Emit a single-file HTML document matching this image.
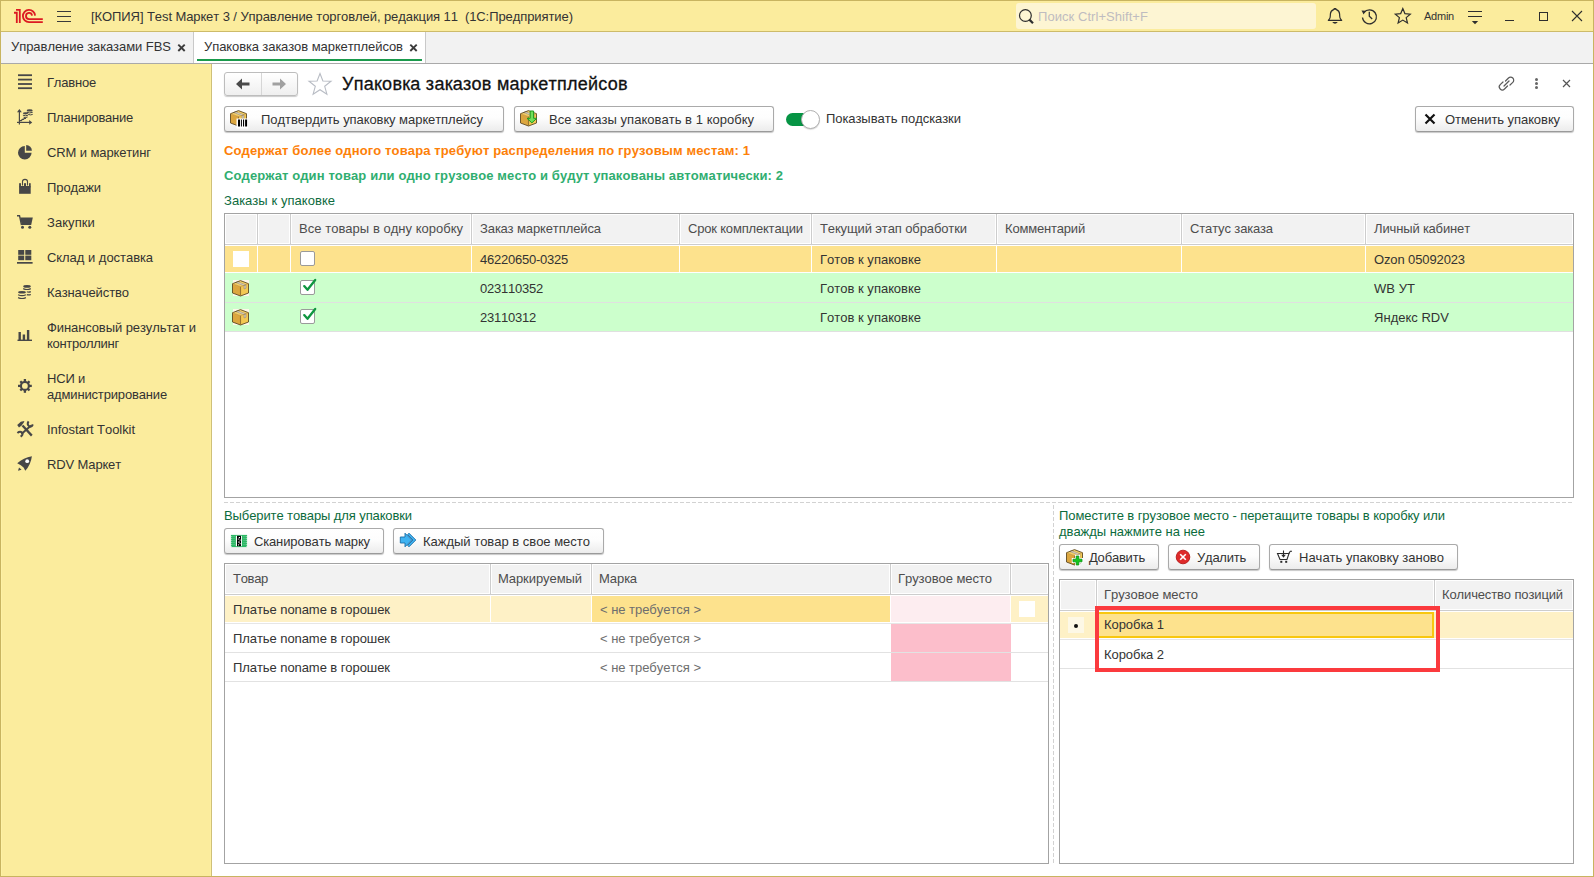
<!DOCTYPE html>
<html><head><meta charset="utf-8">
<style>
*{box-sizing:border-box;margin:0;padding:0}
html,body{width:1594px;height:877px;overflow:hidden;background:#fff}
body{font-family:"Liberation Sans",sans-serif;font-size:13px;color:#333;position:relative;font-kerning:none}
.a{position:absolute;white-space:pre}
.ico{position:absolute;overflow:visible}
.btn{position:absolute;height:26px;border:1px solid #aaaaaa;border-bottom-color:#9a9a9a;border-radius:3px;background:linear-gradient(#ffffff 0%,#fdfdfd 45%,#ececec 100%);box-shadow:0 1px 1px rgba(0,0,0,.22)}
</style></head><body>
<div class="a" style="left:0px;top:0px;width:1594px;height:31px;background:#fbec9d;"></div>
<div class="a" style="left:0px;top:31px;width:1594px;height:1px;background:#cdbb6a;"></div>
<svg class="ico" style="left:0;top:0" width="50" height="30" viewBox="0 0 50 30">
  <g fill="none" stroke="#dc1a22" stroke-width="1.8" stroke-linejoin="miter">
  <path d="M14 12.75 L16.8 12.75 L16.8 22.9"/>
  <path d="M16 9.95 L19.8 9.95 L19.8 22.9"/>
  <path d="M35.1 15.6 A6.1 6.1 0 1 0 29 22.1 L42.8 22.1"/>
  <path d="M32.05 15.6 A3.05 3.05 0 1 0 29 19.05 L42.8 19.05"/>
  </g></svg>
<div class="a" style="left:57px;top:11px;width:14px;height:1.3px;background:#3a3a3a;"></div>
<div class="a" style="left:57px;top:16px;width:14px;height:1.3px;background:#3a3a3a;"></div>
<div class="a" style="left:57px;top:21px;width:14px;height:1.3px;background:#3a3a3a;"></div>
<div class="a" style="left:91px;top:9px;line-height:15px;color:#333;letter-spacing:-0.081px;">[КОПИЯ] Test Маркет 3 / Управление торговлей, редакция 11  (1С:Предприятие)</div>
<div class="a" style="left:1016px;top:3px;width:300px;height:26px;background:#fdf5d3;border-radius:3px"></div>
<svg class="ico" style="left:1016px;top:6px" width="22" height="20" viewBox="0 0 22 20"><circle cx="9.4" cy="9.5" r="5.9" fill="none" stroke="#2e2e2e" stroke-width="1.2"/><path d="M13.4 13.6 L17 17.2" stroke="#2e2e2e" stroke-width="2.2"/></svg>
<div class="a" style="left:1038px;top:9px;line-height:15px;color:#bfbcc0;letter-spacing:0.056px;">Поиск Ctrl+Shift+F</div>
<svg class="ico" style="left:1326px;top:7px" width="18" height="18" viewBox="0 0 18 18"><path d="M2.3 13.3 L3.3 12.2 Q4.2 11.2 4.3 9 L4.4 7 Q4.6 3.6 7.6 2.6 L8.1 1.8 Q9 1.3 9.9 1.8 L10.4 2.6 Q13.4 3.6 13.6 7 L13.7 9 Q13.8 11.2 14.7 12.2 L15.7 13.3 Z" fill="none" stroke="#2e2e2e" stroke-width="1.2" stroke-linejoin="round"/><path d="M6.2 15 L11.8 15 Q9 18.6 6.2 15 Z" fill="#2e2e2e"/><circle cx="9" cy="2" r="0.9" fill="#2e2e2e"/></svg>
<svg class="ico" style="left:1360px;top:7px" width="18" height="18" viewBox="0 0 18 18"><path d="M4 5.5 A7 7 0 1 1 2.5 10.5" fill="none" stroke="#2e2e2e" stroke-width="1.3"/><path d="M1.5 3.5 L5.8 3.8 L3.6 7.5 Z" fill="#2e2e2e"/><path d="M9.3 4.8 L9.3 9.2 L12.2 12" fill="none" stroke="#2e2e2e" stroke-width="1.3"/></svg>
<svg class="ico" style="left:1394px;top:7px" width="18" height="18" viewBox="0 0 18 18"><path d="M8.8 1.6 L10.9 6.6 L16.3 7.1 L12.2 10.6 L13.5 16 L8.8 13.1 L4.1 16 L5.4 10.6 L1.3 7.1 L6.7 6.6 Z" fill="none" stroke="#2e2e2e" stroke-width="1.2" stroke-linejoin="miter"/></svg>
<div class="a" style="left:1424px;top:10px;line-height:12px;color:#333;letter-spacing:-0.237px;font-size:11px;">Admin</div>
<div class="a" style="left:1468px;top:11px;width:14px;height:1.2px;background:#2e2e2e;"></div>
<div class="a" style="left:1468px;top:16px;width:14px;height:1.2px;background:#2e2e2e;"></div>
<svg class="ico" style="left:1471px;top:20px" width="8" height="5" viewBox="0 0 8 5"><path d="M0.8 1 L7.2 1 L4 4.2 Z" fill="#2e2e2e"/></svg>
<div class="a" style="left:1505px;top:20px;width:9px;height:1.3px;background:#2e2e2e;"></div>
<div class="a" style="left:1539px;top:12px;width:9px;height:9px;background:transparent;border:1.2px solid #2e2e2e"></div>
<svg class="ico" style="left:1571px;top:10px" width="12" height="12" viewBox="0 0 12 12"><path d="M1 1 L11 11 M11 1 L1 11" stroke="#2e2e2e" stroke-width="1.1"/></svg>
<div class="a" style="left:0px;top:32px;width:1594px;height:31px;background:#f2f2f2;"></div>
<div class="a" style="left:0px;top:63px;width:1594px;height:1px;background:#a9a9a9;"></div>
<div class="a" style="left:11px;top:39px;line-height:15px;color:#333;letter-spacing:-0.051px;">Управление заказами FBS</div>
<svg class="ico" style="left:176px;top:43px" width="11" height="10" viewBox="0 0 11 10"><path d="M2.3 1.6 L8.7 8 M8.7 1.6 L2.3 8" stroke="#3a3a3a" stroke-width="1.9"/></svg>
<div class="a" style="left:193px;top:32px;width:1px;height:31px;background:#c9c9c9;"></div>
<div class="a" style="left:194px;top:32px;width:231px;height:31px;background:#fff;"></div>
<div class="a" style="left:425px;top:32px;width:1px;height:31px;background:#c9c9c9;"></div>
<div class="a" style="left:197px;top:59px;width:225px;height:2px;background:#1a9a4c;"></div>
<div class="a" style="left:204px;top:39px;line-height:15px;color:#333;letter-spacing:-0.059px;">Упаковка заказов маркетплейсов</div>
<svg class="ico" style="left:408px;top:43px" width="11" height="10" viewBox="0 0 11 10"><path d="M2.3 1.6 L8.7 8 M8.7 1.6 L2.3 8" stroke="#3a3a3a" stroke-width="1.9"/></svg>
<div class="a" style="left:0px;top:64px;width:211px;height:813px;background:#fbec9d;"></div>
<div class="a" style="left:211px;top:64px;width:1px;height:813px;background:#cfc079;"></div>
<div class="a" style="left:210px;top:64px;width:1px;height:812px;background:#fdf0a2;"></div>
<div class="a" style="left:1px;top:64px;width:1px;height:812px;background:#fdf1a6;"></div>
<svg class="ico" style="left:17px;top:73px" width="16" height="18" viewBox="0 0 16 18"><g fill="#474747"><rect x="1" y="1.3" width="14" height="1.8"/><rect x="1" y="5.7" width="14" height="1.8"/><rect x="1" y="10.1" width="14" height="1.8"/><rect x="1" y="14.3" width="14" height="1.8"/></g></svg>
<svg class="ico" style="left:14px;top:106px" width="22" height="22" viewBox="0 0 22 22"><g fill="none" stroke="#474747" stroke-width="1.2"><path d="M5.4 4 L5.4 18.6"/><path d="M3 16.4 L16 16.4"/><path d="M6 14.6 L7.3 14.6 L8.3 13.4 L9.4 13.4 L10.4 12.4 L12 12.4"/></g><g fill="#474747"><path d="M3 6.2 L5.4 3 L7.8 6.2 Z"/><path d="M15.2 14 L18.2 16.4 L15.2 18.8 Z"/><ellipse cx="15.7" cy="4.4" rx="3" ry="1.2"/><ellipse cx="11.5" cy="7.3" rx="2.6" ry="1.1"/></g><g fill="none" stroke="#474747" stroke-width="1"><path d="M12.7 6.3 Q15.7 7.5 18.7 6.3"/><path d="M14.2 8.4 Q16.5 9.4 18.7 8.4"/><path d="M8.9 9.2 Q11.5 10.3 14.1 9.2"/><path d="M9.6 11.2 Q11.5 12 13.6 11"/></g></svg>
<svg class="ico" style="left:14px;top:141px" width="22" height="22" viewBox="0 0 22 22"><path fill="#474747" d="M10.8 4.9 L10.8 11.8 L17.6 11.8 A6.8 6.8 0 1 1 10.8 4.9 Z"/><path fill="#474747" d="M12.2 4.1 L12.2 9.8 L17.9 9.8 A5.7 5.7 0 0 0 12.2 4.1 Z"/></svg>
<svg class="ico" style="left:14px;top:176px" width="22" height="22" viewBox="0 0 22 22"><rect x="5.1" y="7.2" width="11.6" height="10.6" fill="#474747"/><path d="M8.5 10 L8.5 5.6 Q8.5 3.4 11 3.4 Q13.5 3.4 13.5 5.6 L13.5 10" fill="none" stroke="#fbec9d" stroke-width="3"/><path d="M8.5 9.5 L8.5 5.6 Q8.5 3.4 11 3.4 Q13.5 3.4 13.5 5.6 L13.5 9.5" fill="none" stroke="#474747" stroke-width="1.1"/><rect x="5.1" y="10.3" width="11.6" height="1" fill="#474747"/></svg>
<svg class="ico" style="left:16px;top:214px" width="18" height="16" viewBox="0 0 18 16"><path fill="#474747" d="M4.2 3.5 L16.8 3.5 L15.2 11 L5.8 11 Z"/><path fill="none" stroke="#474747" stroke-width="1.4" d="M1 1.7 L3.5 1.7 L5.5 11"/><circle cx="6.5" cy="13.2" r="1.5" fill="#474747"/><circle cx="13.8" cy="13.2" r="1.5" fill="#474747"/></svg>
<svg class="ico" style="left:17px;top:249px" width="16" height="16" viewBox="0 0 16 16"><g fill="#474747"><rect x="1.2" y="1" width="6" height="4.8"/><rect x="8.3" y="1" width="6" height="4.8"/><rect x="1.2" y="6.6" width="6" height="4.6"/><rect x="8.3" y="6.6" width="6" height="4.6"/><rect x="0" y="13" width="15.6" height="1.7"/></g></svg>
<svg class="ico" style="left:14px;top:281px" width="22" height="22" viewBox="0 0 22 22"><g fill="#474747"><ellipse cx="13" cy="5.4" rx="3.8" ry="1.3"/><ellipse cx="8" cy="11.3" rx="3.9" ry="1.3"/></g><g fill="none" stroke="#474747" stroke-width="1.2"><path d="M9.2 7.6 Q13 9.4 16.8 7.6"/><path d="M12.8 10.8 Q15 11.5 16.8 10.6"/><path d="M12.8 13.6 Q15 14.4 16.8 13.4"/><path d="M4.1 13.8 Q8 15.6 11.9 13.8"/><path d="M4.1 16.6 Q8 18.4 11.9 16.6"/></g></svg>
<svg class="ico" style="left:17px;top:328px" width="16" height="15" viewBox="0 0 16 15"><g fill="#474747"><rect x="1.5" y="4" width="2.4" height="8.5"/><rect x="5.7" y="6.5" width="2.4" height="6"/><rect x="9.9" y="2" width="2.4" height="10.5"/><rect x="0.5" y="11.6" width="14.5" height="1.4"/></g></svg>
<svg class="ico" style="left:14px;top:375px" width="22" height="22" viewBox="0 0 22 22"><g fill="#474747"><circle cx="10.9" cy="10.9" r="5"/><g stroke="#474747" stroke-width="2.3"><path d="M10.9 4 L10.9 17.8"/><path d="M4 10.9 L17.8 10.9"/><path d="M6.3 6.3 L15.5 15.5"/><path d="M15.5 6.3 L6.3 15.5"/></g></g><circle cx="10.9" cy="10.9" r="2.9" fill="#fbec9d"/></svg>
<svg class="ico" style="left:14px;top:418px" width="22" height="22" viewBox="0 0 22 22"><g fill="none" stroke="#474747"><path d="M8.5 7.5 L17.8 17.6" stroke-width="2.3"/><path d="M17 7.5 L7.5 16" stroke-width="1.9"/><path d="M14.6 3.4 Q12.6 6.5 15.2 8.3 Q17.6 9.6 18.8 6.4" stroke-width="2"/><path d="M3.4 15 Q6 12.8 8 14.6 Q9.6 16.8 6.6 18.6" stroke-width="2"/></g><path fill="#474747" d="M3.2 7 L6.8 3.8 L10.4 3 L9.8 4.6 L7.6 7.6 L5 9.4 Z"/></svg>
<svg class="ico" style="left:14px;top:453px" width="22" height="22" viewBox="0 0 22 22"><path fill="#474747" d="M3.2 10.2 Q9.5 4.8 17.9 3.2 Q16.8 11.6 11.3 17.8 L9.6 14.6 L6.8 12.3 Z"/><circle cx="13.2" cy="8.2" r="1.9" fill="#fff"/><path fill="#474747" d="M4 17.8 L5 14.6 L7.6 16.8 Z"/></svg>
<div class="a" style="left:47px;top:75px;line-height:15px;color:#333;letter-spacing:-0.201px;">Главное</div>
<div class="a" style="left:47px;top:110px;line-height:15px;color:#333;letter-spacing:-0.240px;">Планирование</div>
<div class="a" style="left:47px;top:145px;line-height:15px;color:#333;letter-spacing:-0.103px;">CRM и маркетинг</div>
<div class="a" style="left:47px;top:180px;line-height:15px;color:#333;letter-spacing:-0.085px;">Продажи</div>
<div class="a" style="left:47px;top:215px;line-height:15px;color:#333;letter-spacing:0.103px;">Закупки</div>
<div class="a" style="left:47px;top:250px;line-height:15px;color:#333;letter-spacing:-0.018px;">Склад и доставка</div>
<div class="a" style="left:47px;top:285px;line-height:15px;color:#333;letter-spacing:-0.086px;">Казначейство</div>
<div class="a" style="left:47px;top:320px;line-height:15px;color:#333;letter-spacing:-0.085px;">Финансовый результат и</div>
<div class="a" style="left:47px;top:336px;line-height:15px;color:#333;letter-spacing:-0.259px;">контроллинг</div>
<div class="a" style="left:47px;top:371px;line-height:15px;color:#333;letter-spacing:-0.200px;">НСИ и</div>
<div class="a" style="left:47px;top:387px;line-height:15px;color:#333;letter-spacing:-0.158px;">администрирование</div>
<div class="a" style="left:47px;top:422px;line-height:15px;color:#333;letter-spacing:-0.051px;">Infostart Toolkit</div>
<div class="a" style="left:47px;top:457px;line-height:15px;color:#333;letter-spacing:-0.123px;">RDV Маркет</div>
<div class="a" style="left:224px;top:72px;width:74px;height:24px;border:1px solid #bdbdbd;border-radius:3px;background:linear-gradient(#fff,#efefef);box-shadow:0 1px 1px rgba(0,0,0,.2)"></div>
<div class="a" style="left:261px;top:73px;width:1px;height:22px;background:#d6d6d6;"></div>
<svg class="ico" style="left:235px;top:77px" width="16" height="14" viewBox="0 0 16 14"><path fill="#4a4a4a" d="M1 7 L7 1.5 L7 5.5 L14.5 5.5 L14.5 8.5 L7 8.5 L7 12.5 Z"/></svg>
<svg class="ico" style="left:271px;top:77px" width="16" height="14" viewBox="0 0 16 14"><path fill="#a0a0a0" d="M15 7 L9 1.5 L9 5.5 L1.5 5.5 L1.5 8.5 L9 8.5 L9 12.5 Z"/></svg>
<svg class="ico" style="left:307px;top:72px" width="26" height="24" viewBox="0 0 26 24"><path d="M13 1.5 L15.9 9 L24 9.3 L17.7 14.3 L19.9 22.2 L13 17.7 L6.1 22.2 L8.3 14.3 L2 9.3 L10.1 9 Z" fill="none" stroke="#b8bcc4" stroke-width="1.1" stroke-linejoin="miter"/></svg>
<div class="a" style="left:342px;top:74px;line-height:20px;color:#111;letter-spacing:0.260px;font-size:18px;-webkit-text-stroke:0.3px #111">Упаковка заказов маркетплейсов</div>
<svg class="ico" style="left:1497px;top:74px" width="19" height="19" viewBox="0 0 19 19"><g fill="none" stroke="#595959" stroke-width="1.2" stroke-linecap="round"><path d="M8.5 7 L11.5 4 A3 3 0 0 1 15.8 8.3 L13 11"/><path d="M10.5 12 L7.5 15 A3 3 0 0 1 3.2 10.7 L6 8"/><path d="M7 12 L12 7"/></g></svg>
<div class="a" style="left:1535px;top:77.7px;width:3px;height:3px;background:#666;border-radius:50%"></div>
<div class="a" style="left:1535px;top:82px;width:3px;height:3px;background:#666;border-radius:50%"></div>
<div class="a" style="left:1535px;top:86.2px;width:3px;height:3px;background:#666;border-radius:50%"></div>
<svg class="ico" style="left:1562px;top:79px" width="9" height="9" viewBox="0 0 9 9"><path d="M1 1 L8 8 M8 1 L1 8" stroke="#555" stroke-width="1.2"/></svg>
<div class="btn" style="left:224px;top:106px;width:280px;height:26px"></div>
<div class="a" style="left:261px;top:112px;line-height:15px;color:#333;letter-spacing:-0.045px;">Подтвердить упаковку маркетплейсу</div>
<svg class="ico" style="left:230px;top:110px" width="17" height="17" viewBox="0 0 17 17"><path fill="#dca63e" d="M0.5 3.7 L8.5 6.6 L8.5 16 L0.5 13 Z"/><path fill="#f3c853" d="M8.5 6.6 L16.5 3.7 L16.5 13 L8.5 16 Z"/><path fill="#f6d066" d="M0.5 3.7 L8.5 0.6 L16.5 3.7 L8.5 6.6 Z"/><path fill="#dcd6c8" stroke="#8c8270" stroke-width="0.5" d="M3.6 2.5 L5.6 1.7 L14 4.9 L12 5.7 Z"/><path fill="#cfc8b8" stroke="#8c8270" stroke-width="0.5" d="M12 5.7 L14 4.9 L14 8.2 L12 9 Z"/><path fill="none" stroke="#5e4a22" stroke-width="0.9" stroke-linejoin="round" d="M0.5 3.7 L8.5 0.6 L16.5 3.7 L16.5 13 L8.5 16 L0.5 13 Z"/><path fill="none" stroke="#9a7630" stroke-width="1.1" d="M8.5 6.6 L8.5 16"/><path fill="none" stroke="#b88a34" stroke-width="0.6" d="M0.5 3.7 L8.5 6.6 L16.5 3.7"/><rect x="10.5" y="12.5" width="6.5" height="4.5" fill="#fff"/></svg>
<svg class="ico" style="left:236px;top:118px" width="13" height="11" viewBox="0 0 13 11"><rect x="0.5" y="0.5" width="11.5" height="10" fill="#fff"/><g fill="#000"><rect x="2" y="1.5" width="2" height="7"/><rect x="4.9" y="1.5" width="1" height="7"/><rect x="7" y="1.5" width="1.1" height="7"/><rect x="9.1" y="1.5" width="2" height="7"/></g></svg>
<div class="btn" style="left:514px;top:106px;width:260px;height:26px"></div>
<div class="a" style="left:549px;top:112px;line-height:15px;color:#333;letter-spacing:0.044px;">Все заказы упаковать в 1 коробку</div>
<svg class="ico" style="left:520px;top:110px" width="17" height="17" viewBox="0 0 17 17"><path fill="#dca63e" d="M0.5 3.7 L8.5 6.6 L8.5 16 L0.5 13 Z"/><path fill="#f3c853" d="M8.5 6.6 L16.5 3.7 L16.5 13 L8.5 16 Z"/><path fill="#f6d066" d="M0.5 3.7 L8.5 0.6 L16.5 3.7 L8.5 6.6 Z"/><path fill="#dcd6c8" stroke="#8c8270" stroke-width="0.5" d="M3.6 2.5 L5.6 1.7 L14 4.9 L12 5.7 Z"/><path fill="#cfc8b8" stroke="#8c8270" stroke-width="0.5" d="M12 5.7 L14 4.9 L14 8.2 L12 9 Z"/><path fill="none" stroke="#5e4a22" stroke-width="0.9" stroke-linejoin="round" d="M0.5 3.7 L8.5 0.6 L16.5 3.7 L16.5 13 L8.5 16 L0.5 13 Z"/><path fill="none" stroke="#9a7630" stroke-width="1.1" d="M8.5 6.6 L8.5 16"/><path fill="none" stroke="#b88a34" stroke-width="0.6" d="M0.5 3.7 L8.5 6.6 L16.5 3.7"/><path fill="#6fe05a" stroke="#1f9a1f" stroke-width="1" stroke-linejoin="round" d="M10.2 1 L13.6 1 L13.6 8.3 L16.8 8.3 L11.9 12.9 L7 8.3 L10.2 8.3 Z"/></svg>
<div class="a" style="left:786px;top:113px;width:24px;height:13px;background:#069444;border-radius:7px"></div>
<div class="a" style="left:801px;top:110px;width:19px;height:19px;background:#fff;border-radius:50%;border:1px solid #b0b0b0;box-shadow:0 1px 1px rgba(0,0,0,.15)"></div>
<div class="a" style="left:826px;top:111px;line-height:15px;color:#333;letter-spacing:-0.023px;">Показывать подсказки</div>
<div class="btn" style="left:1415px;top:106px;width:159px;height:26px"></div>
<div class="a" style="left:1445px;top:112px;line-height:15px;color:#333;letter-spacing:-0.047px;">Отменить упаковку</div>
<svg class="ico" style="left:1424px;top:113px" width="12" height="12" viewBox="0 0 12 12"><path d="M1.5 1.5 L10.5 10.5 M10.5 1.5 L1.5 10.5" stroke="#111" stroke-width="2.2"/></svg>
<div class="a" style="left:224px;top:143px;line-height:15px;color:#fd8008;letter-spacing:0.122px;font-weight:bold;">Содержат более одного товара требуют распределения по грузовым местам: 1</div>
<div class="a" style="left:224px;top:168px;line-height:15px;color:#30ae70;letter-spacing:0.111px;font-weight:bold;">Содержат один товар или одно грузовое место и будут упакованы автоматически: 2</div>
<div class="a" style="left:224px;top:193px;line-height:15px;color:#0e6b40;letter-spacing:0.074px;">Заказы к упаковке</div>
<div class="a" style="left:224px;top:213px;width:1350px;height:285px;background:#fff;border:1px solid #a3a3a3"></div>
<div class="a" style="left:226px;top:215px;width:30px;height:28px;background:#f2f2f2;"></div>
<div class="a" style="left:259px;top:215px;width:30px;height:28px;background:#f2f2f2;"></div>
<div class="a" style="left:292px;top:215px;width:178px;height:28px;background:#f2f2f2;"></div>
<div class="a" style="left:473px;top:215px;width:205px;height:28px;background:#f2f2f2;"></div>
<div class="a" style="left:681px;top:215px;width:129px;height:28px;background:#f2f2f2;"></div>
<div class="a" style="left:813px;top:215px;width:182px;height:28px;background:#f2f2f2;"></div>
<div class="a" style="left:998px;top:215px;width:182px;height:28px;background:#f2f2f2;"></div>
<div class="a" style="left:1183px;top:215px;width:181px;height:28px;background:#f2f2f2;"></div>
<div class="a" style="left:1367px;top:215px;width:205px;height:28px;background:#f2f2f2;"></div>
<div class="a" style="left:257px;top:214px;width:1px;height:30px;background:#cdcdcd;"></div>
<div class="a" style="left:290px;top:214px;width:1px;height:30px;background:#cdcdcd;"></div>
<div class="a" style="left:471px;top:214px;width:1px;height:30px;background:#cdcdcd;"></div>
<div class="a" style="left:679px;top:214px;width:1px;height:30px;background:#cdcdcd;"></div>
<div class="a" style="left:811px;top:214px;width:1px;height:30px;background:#cdcdcd;"></div>
<div class="a" style="left:996px;top:214px;width:1px;height:30px;background:#cdcdcd;"></div>
<div class="a" style="left:1181px;top:214px;width:1px;height:30px;background:#cdcdcd;"></div>
<div class="a" style="left:1365px;top:214px;width:1px;height:30px;background:#cdcdcd;"></div>
<div class="a" style="left:225px;top:244px;width:1348px;height:1px;background:#cdcdcd;"></div>
<div class="a" style="left:299px;top:221px;line-height:15px;color:#4d4d4d;letter-spacing:0.033px;">Все товары в одну коробку</div>
<div class="a" style="left:480px;top:221px;line-height:15px;color:#4d4d4d;letter-spacing:-0.095px;">Заказ маркетплейса</div>
<div class="a" style="left:688px;top:221px;line-height:15px;color:#4d4d4d;letter-spacing:-0.161px;">Срок комплектации</div>
<div class="a" style="left:820px;top:221px;line-height:15px;color:#4d4d4d;letter-spacing:-0.111px;">Текущий этап обработки</div>
<div class="a" style="left:1005px;top:221px;line-height:15px;color:#4d4d4d;letter-spacing:-0.186px;">Комментарий</div>
<div class="a" style="left:1190px;top:221px;line-height:15px;color:#4d4d4d;letter-spacing:-0.111px;">Статус заказа</div>
<div class="a" style="left:1374px;top:221px;line-height:15px;color:#4d4d4d;letter-spacing:-0.140px;">Личный кабинет</div>
<div class="a" style="left:225px;top:246px;width:32px;height:26px;background:#fde28d;"></div>
<div class="a" style="left:258px;top:246px;width:32px;height:26px;background:#fde28d;"></div>
<div class="a" style="left:291px;top:246px;width:180px;height:26px;background:#fde28d;"></div>
<div class="a" style="left:472px;top:246px;width:207px;height:26px;background:#fde28d;"></div>
<div class="a" style="left:680px;top:246px;width:131px;height:26px;background:#fde28d;"></div>
<div class="a" style="left:812px;top:246px;width:184px;height:26px;background:#fde28d;"></div>
<div class="a" style="left:997px;top:246px;width:184px;height:26px;background:#fde28d;"></div>
<div class="a" style="left:1182px;top:246px;width:183px;height:26px;background:#fde28d;"></div>
<div class="a" style="left:1366px;top:246px;width:207px;height:26px;background:#fde28d;"></div>
<div class="a" style="left:225px;top:273px;width:1348px;height:29px;background:#ccffcc;"></div>
<div class="a" style="left:225px;top:302px;width:1348px;height:1px;background:#e0e0e0;"></div>
<div class="a" style="left:225px;top:303px;width:1348px;height:28px;background:#ccffcc;"></div>
<div class="a" style="left:225px;top:331px;width:1348px;height:1px;background:#e0e0e0;"></div>
<div class="a" style="left:480px;top:252px;line-height:15px;color:#333;letter-spacing:-0.242px;">46220650-0325</div>
<div class="a" style="left:820px;top:252px;line-height:15px;color:#333;letter-spacing:0.012px;">Готов к упаковке</div>
<div class="a" style="left:1374px;top:252px;line-height:15px;color:#333;letter-spacing:-0.120px;">Ozon 05092023</div>
<div class="a" style="left:480px;top:281px;line-height:15px;color:#333;letter-spacing:-0.234px;">023110352</div>
<div class="a" style="left:820px;top:281px;line-height:15px;color:#333;letter-spacing:0.012px;">Готов к упаковке</div>
<div class="a" style="left:1374px;top:281px;line-height:15px;color:#333;letter-spacing:0.050px;">WB УТ</div>
<div class="a" style="left:480px;top:310px;line-height:15px;color:#333;letter-spacing:-0.234px;">23110312</div>
<div class="a" style="left:820px;top:310px;line-height:15px;color:#333;letter-spacing:0.012px;">Готов к упаковке</div>
<div class="a" style="left:1374px;top:310px;line-height:15px;color:#333;letter-spacing:0.037px;">Яндекс RDV</div>
<div class="a" style="left:233px;top:251px;width:16px;height:16px;background:#fff;"></div>
<div class="a" style="left:300px;top:251px;width:15px;height:15px;background:#fff;border:1px solid #9a9a9a;border-radius:2px"></div>
<div class="a" style="left:233px;top:280px;width:16px;height:16px;background:#fdf8ea;"></div>
<svg class="ico" style="left:232px;top:280px" width="17" height="17" viewBox="0 0 17 17"><path fill="#dca63e" d="M0.5 3.7 L8.5 6.6 L8.5 16 L0.5 13 Z"/><path fill="#f3c853" d="M8.5 6.6 L16.5 3.7 L16.5 13 L8.5 16 Z"/><path fill="#f6d066" d="M0.5 3.7 L8.5 0.6 L16.5 3.7 L8.5 6.6 Z"/><path fill="#dcd6c8" stroke="#8c8270" stroke-width="0.5" d="M3.6 2.5 L5.6 1.7 L14 4.9 L12 5.7 Z"/><path fill="#cfc8b8" stroke="#8c8270" stroke-width="0.5" d="M12 5.7 L14 4.9 L14 8.2 L12 9 Z"/><path fill="none" stroke="#5e4a22" stroke-width="0.9" stroke-linejoin="round" d="M0.5 3.7 L8.5 0.6 L16.5 3.7 L16.5 13 L8.5 16 L0.5 13 Z"/><path fill="none" stroke="#9a7630" stroke-width="1.1" d="M8.5 6.6 L8.5 16"/><path fill="none" stroke="#b88a34" stroke-width="0.6" d="M0.5 3.7 L8.5 6.6 L16.5 3.7"/></svg>
<div class="a" style="left:300px;top:280px;width:15px;height:15px;background:#fff;border:1px solid #9a9a9a;border-radius:2px"></div><svg class="ico" style="left:300px;top:276px" width="17" height="17" viewBox="0 0 17 17"><path d="M4.2 10.1 L7.5 13.8 L15.2 4" fill="none" stroke="#0f9640" stroke-width="2.3" stroke-linecap="round" stroke-linejoin="round"/></svg>
<div class="a" style="left:233px;top:309px;width:16px;height:16px;background:#fdf8ea;"></div>
<svg class="ico" style="left:232px;top:309px" width="17" height="17" viewBox="0 0 17 17"><path fill="#dca63e" d="M0.5 3.7 L8.5 6.6 L8.5 16 L0.5 13 Z"/><path fill="#f3c853" d="M8.5 6.6 L16.5 3.7 L16.5 13 L8.5 16 Z"/><path fill="#f6d066" d="M0.5 3.7 L8.5 0.6 L16.5 3.7 L8.5 6.6 Z"/><path fill="#dcd6c8" stroke="#8c8270" stroke-width="0.5" d="M3.6 2.5 L5.6 1.7 L14 4.9 L12 5.7 Z"/><path fill="#cfc8b8" stroke="#8c8270" stroke-width="0.5" d="M12 5.7 L14 4.9 L14 8.2 L12 9 Z"/><path fill="none" stroke="#5e4a22" stroke-width="0.9" stroke-linejoin="round" d="M0.5 3.7 L8.5 0.6 L16.5 3.7 L16.5 13 L8.5 16 L0.5 13 Z"/><path fill="none" stroke="#9a7630" stroke-width="1.1" d="M8.5 6.6 L8.5 16"/><path fill="none" stroke="#b88a34" stroke-width="0.6" d="M0.5 3.7 L8.5 6.6 L16.5 3.7"/></svg>
<div class="a" style="left:300px;top:309px;width:15px;height:15px;background:#fff;border:1px solid #9a9a9a;border-radius:2px"></div><svg class="ico" style="left:300px;top:305px" width="17" height="17" viewBox="0 0 17 17"><path d="M4.2 10.1 L7.5 13.8 L15.2 4" fill="none" stroke="#0f9640" stroke-width="2.3" stroke-linecap="round" stroke-linejoin="round"/></svg>
<div class="a" style="left:224px;top:502px;width:1350px;height:1px;background:repeating-linear-gradient(90deg,#d2d2d2 0 4px,transparent 4px 6px)"></div>
<div class="a" style="left:1053px;top:505px;width:1px;height:359px;background:repeating-linear-gradient(180deg,#d2d2d2 0 4px,transparent 4px 6px)"></div>
<div class="a" style="left:224px;top:508px;line-height:15px;color:#0b6b3c;letter-spacing:-0.103px;">Выберите товары для упаковки</div>
<div class="a" style="left:1059px;top:508px;line-height:15px;color:#0b6b3c;letter-spacing:-0.089px;">Поместите в грузовое место - перетащите товары в коробку или</div>
<div class="a" style="left:1059px;top:524px;line-height:15px;color:#0b6b3c;letter-spacing:-0.034px;">дважды нажмите на нее</div>
<div class="btn" style="left:224px;top:528px;width:160px;height:26px"></div>
<div class="a" style="left:254px;top:534px;line-height:15px;color:#333;letter-spacing:-0.075px;">Сканировать марку</div>
<div class="btn" style="left:393px;top:528px;width:211px;height:26px"></div>
<div class="a" style="left:423px;top:534px;line-height:15px;color:#333;letter-spacing:-0.014px;">Каждый товар в свое место</div>
<div class="btn" style="left:1059px;top:544px;width:100px;height:26px"></div>
<div class="a" style="left:1089px;top:550px;line-height:15px;color:#333;letter-spacing:-0.201px;">Добавить</div>
<div class="btn" style="left:1168px;top:544px;width:92px;height:26px"></div>
<div class="a" style="left:1197px;top:550px;line-height:15px;color:#333;letter-spacing:-0.234px;">Удалить</div>
<div class="btn" style="left:1269px;top:544px;width:189px;height:26px"></div>
<div class="a" style="left:1299px;top:550px;line-height:15px;color:#333;letter-spacing:-0.004px;">Начать упаковку заново</div>
<div class="a" style="left:224px;top:563px;width:825px;height:301px;background:#fff;border:1px solid #a3a3a3"></div>
<div class="a" style="left:226px;top:565px;width:263px;height:28px;background:#f2f2f2;"></div>
<div class="a" style="left:492px;top:565px;width:98px;height:28px;background:#f2f2f2;"></div>
<div class="a" style="left:593px;top:565px;width:296px;height:28px;background:#f2f2f2;"></div>
<div class="a" style="left:892px;top:565px;width:117px;height:28px;background:#f2f2f2;"></div>
<div class="a" style="left:1012px;top:565px;width:35px;height:28px;background:#f2f2f2;"></div>
<div class="a" style="left:490px;top:564px;width:1px;height:30px;background:#cdcdcd;"></div>
<div class="a" style="left:591px;top:564px;width:1px;height:30px;background:#cdcdcd;"></div>
<div class="a" style="left:890px;top:564px;width:1px;height:30px;background:#cdcdcd;"></div>
<div class="a" style="left:1010px;top:564px;width:1px;height:30px;background:#cdcdcd;"></div>
<div class="a" style="left:225px;top:594px;width:823px;height:1px;background:#cdcdcd;"></div>
<div class="a" style="left:233px;top:571px;line-height:15px;color:#4d4d4d;letter-spacing:-0.309px;">Товар</div>
<div class="a" style="left:498px;top:571px;line-height:15px;color:#4d4d4d;letter-spacing:-0.070px;">Маркируемый</div>
<div class="a" style="left:599px;top:571px;line-height:15px;color:#4d4d4d;letter-spacing:-0.044px;">Марка</div>
<div class="a" style="left:898px;top:571px;line-height:15px;color:#4d4d4d;letter-spacing:-0.058px;">Грузовое место</div>
<div class="a" style="left:225px;top:596px;width:265px;height:26px;background:#fef1c6;"></div>
<div class="a" style="left:491px;top:596px;width:100px;height:26px;background:#fef1c6;"></div>
<div class="a" style="left:592px;top:596px;width:298px;height:26px;background:#fde28d;"></div>
<div class="a" style="left:891px;top:596px;width:119px;height:26px;background:#fdedf0;"></div>
<div class="a" style="left:1011px;top:596px;width:37px;height:26px;background:#fef1c6;"></div>
<div class="a" style="left:225px;top:623px;width:823px;height:1px;background:#e6e6e6;"></div>
<div class="a" style="left:891px;top:624px;width:120px;height:28px;background:#fcbecb;"></div>
<div class="a" style="left:225px;top:652px;width:823px;height:1px;background:#e2e2e2;"></div>
<div class="a" style="left:891px;top:653px;width:120px;height:28px;background:#fcbecb;"></div>
<div class="a" style="left:225px;top:681px;width:823px;height:1px;background:#e2e2e2;"></div>
<div class="a" style="left:1019px;top:601px;width:16px;height:16px;background:#fff;"></div>
<div class="a" style="left:233px;top:602px;line-height:15px;color:#333;letter-spacing:-0.071px;">Платье noname в горошек</div>
<div class="a" style="left:600px;top:602px;line-height:15px;color:#6e6e6e;letter-spacing:-0.033px;">&lt; не требуется &gt;</div>
<div class="a" style="left:233px;top:631px;line-height:15px;color:#333;letter-spacing:-0.071px;">Платье noname в горошек</div>
<div class="a" style="left:600px;top:631px;line-height:15px;color:#6e6e6e;letter-spacing:-0.033px;">&lt; не требуется &gt;</div>
<div class="a" style="left:233px;top:660px;line-height:15px;color:#333;letter-spacing:-0.071px;">Платье noname в горошек</div>
<div class="a" style="left:600px;top:660px;line-height:15px;color:#6e6e6e;letter-spacing:-0.033px;">&lt; не требуется &gt;</div>
<div class="a" style="left:1059px;top:579px;width:515px;height:285px;background:#fff;border:1px solid #a3a3a3"></div>
<div class="a" style="left:1061px;top:581px;width:34px;height:28px;background:#f2f2f2;"></div>
<div class="a" style="left:1098px;top:581px;width:335px;height:28px;background:#f2f2f2;"></div>
<div class="a" style="left:1436px;top:581px;width:136px;height:28px;background:#f2f2f2;"></div>
<div class="a" style="left:1096px;top:580px;width:1px;height:30px;background:#cdcdcd;"></div>
<div class="a" style="left:1434px;top:580px;width:1px;height:30px;background:#cdcdcd;"></div>
<div class="a" style="left:1060px;top:610px;width:513px;height:1px;background:#cdcdcd;"></div>
<div class="a" style="left:1104px;top:587px;line-height:15px;color:#4d4d4d;letter-spacing:-0.058px;">Грузовое место</div>
<div class="a" style="left:1442px;top:587px;line-height:15px;color:#4d4d4d;letter-spacing:-0.130px;">Количество позиций</div>
<div class="a" style="left:1060px;top:612px;width:513px;height:26px;background:#fef1c6;"></div>
<div class="a" style="left:1060px;top:639px;width:513px;height:1px;background:#e6e6e6;"></div>
<div class="a" style="left:1060px;top:668px;width:513px;height:1px;background:#e2e2e2;"></div>
<div class="a" style="left:1099px;top:612px;width:335px;height:26px;background:#fde28d;border-top:2px solid #f8c70f;border-bottom:2px solid #f8c70f;border-right:2px solid #f8c70f"></div>
<div class="a" style="left:1068px;top:617px;width:16px;height:16px;background:#fdf8e6;"></div>
<div class="a" style="left:1074px;top:624px;width:4px;height:4px;background:#111;border-radius:50%"></div>
<div class="a" style="left:1104px;top:617px;line-height:15px;color:#333;letter-spacing:-0.056px;">Коробка 1</div>
<div class="a" style="left:1104px;top:647px;line-height:15px;color:#333;letter-spacing:-0.056px;">Коробка 2</div>
<div class="a" style="left:1095px;top:606px;width:345px;height:66px;background:transparent;border:4px solid #fb3a3e"></div>
<svg class="ico" style="left:230px;top:534px" width="18" height="14" viewBox="0 0 18 14"><rect x="0.9" y="0.9" width="16.2" height="12.2" fill="#2db866"/><rect x="2" y="2.3" width="3" height="0.7" fill="#58c585"/><rect x="13" y="2.3" width="3" height="0.7" fill="#58c585"/><rect x="2" y="4.3" width="3" height="0.7" fill="#58c585"/><rect x="13" y="4.3" width="3" height="0.7" fill="#58c585"/><rect x="2" y="6.3" width="3" height="0.7" fill="#58c585"/><rect x="13" y="6.3" width="3" height="0.7" fill="#58c585"/><rect x="2" y="8.3" width="3" height="0.7" fill="#58c585"/><rect x="13" y="8.3" width="3" height="0.7" fill="#58c585"/><rect x="2" y="10.3" width="3" height="0.7" fill="#58c585"/><rect x="13" y="10.3" width="3" height="0.7" fill="#58c585"/><circle cx="0.9" cy="2.6" r="0.7" fill="#f6f6f6"/><circle cx="17.1" cy="2.6" r="0.7" fill="#f6f6f6"/><circle cx="0.9" cy="4.6" r="0.7" fill="#f6f6f6"/><circle cx="17.1" cy="4.6" r="0.7" fill="#f6f6f6"/><circle cx="0.9" cy="6.6" r="0.7" fill="#f6f6f6"/><circle cx="17.1" cy="6.6" r="0.7" fill="#f6f6f6"/><circle cx="0.9" cy="8.6" r="0.7" fill="#f6f6f6"/><circle cx="17.1" cy="8.6" r="0.7" fill="#f6f6f6"/><circle cx="0.9" cy="10.6" r="0.7" fill="#f6f6f6"/><circle cx="17.1" cy="10.6" r="0.7" fill="#f6f6f6"/><circle cx="0.9" cy="12.4" r="0.7" fill="#f6f6f6"/><circle cx="17.1" cy="12.4" r="0.7" fill="#f6f6f6"/><rect x="5.9" y="1.8" width="6" height="10.4" fill="#fff"/><rect x="7" y="1.8" width="4" height="10.4" fill="#000"/><g fill="#fff"><rect x="8.8" y="3" width="1.2" height="1.2"/><rect x="7.8" y="4.6" width="1" height="1"/><rect x="9.6" y="5.6" width="1" height="1"/><rect x="8.4" y="7.4" width="1.2" height="1.4"/><rect x="9.6" y="9.2" width="1" height="1"/><rect x="8" y="10.4" width="1" height="1"/></g></svg>
<svg class="ico" style="left:399px;top:532px" width="18" height="16" viewBox="0 0 18 16"><path fill="#3fb3f2" stroke="#1a6da6" stroke-width="0.9" stroke-linejoin="round" d="M10 1.2 L16.8 8 L10 14.8 L8.6 13.4 L14 8 L8.6 2.6 Z"/><path fill="#3fb3f2" stroke="#1a6da6" stroke-width="0.9" stroke-linejoin="round" d="M6 1.2 L12.8 8 L6 14.8 L6 11 L1.3 11 L1.3 5 L6 5 Z"/></svg>
<svg class="ico" style="left:1066px;top:549px" width="18" height="18" viewBox="0 0 18 18"><path fill="#dca63e" d="M0.5 3.7 L8.5 6.6 L8.5 16 L0.5 13 Z"/><path fill="#f3c853" d="M8.5 6.6 L16.5 3.7 L16.5 13 L8.5 16 Z"/><path fill="#f6d066" d="M0.5 3.7 L8.5 0.6 L16.5 3.7 L8.5 6.6 Z"/><path fill="#dcd6c8" stroke="#8c8270" stroke-width="0.5" d="M3.6 2.5 L5.6 1.7 L14 4.9 L12 5.7 Z"/><path fill="#cfc8b8" stroke="#8c8270" stroke-width="0.5" d="M12 5.7 L14 4.9 L14 8.2 L12 9 Z"/><path fill="none" stroke="#5e4a22" stroke-width="0.9" stroke-linejoin="round" d="M0.5 3.7 L8.5 0.6 L16.5 3.7 L16.5 13 L8.5 16 L0.5 13 Z"/><path fill="none" stroke="#9a7630" stroke-width="1.1" d="M8.5 6.6 L8.5 16"/><path fill="none" stroke="#b88a34" stroke-width="0.6" d="M0.5 3.7 L8.5 6.6 L16.5 3.7"/><path fill="#12c81c" stroke="#fff" stroke-width="2.4" d="M10.2 7 L12.8 7 L12.8 10.2 L16 10.2 L16 12.8 L12.8 12.8 L12.8 16 L10.2 16 L10.2 12.8 L7 12.8 L7 10.2 L10.2 10.2 Z"/><path fill="#12c81c" stroke="#0d8f14" stroke-width="0.8" d="M10.2 7 L12.8 7 L12.8 10.2 L16 10.2 L16 12.8 L12.8 12.8 L12.8 16 L10.2 16 L10.2 12.8 L7 12.8 L7 10.2 L10.2 10.2 Z"/></svg>
<svg class="ico" style="left:1175px;top:549px" width="16" height="16" viewBox="0 0 16 16"><circle cx="8" cy="8" r="6.8" fill="#de2a2a" stroke="#b51a1a" stroke-width="0.9"/><path d="M5.2 5.2 L10.8 10.8 M10.8 5.2 L5.2 10.8" stroke="#fff" stroke-width="1.6"/></svg>
<svg class="ico" style="left:1276px;top:549px" width="18" height="16" viewBox="0 0 18 16"><g fill="none" stroke="#2a2a2a" stroke-width="1.1"><path d="M1.5 4.5 L13 4.5 L11 10.5 L4 10.5 Z"/><path d="M12.6 4.8 L14.3 2.2 L16 2.2"/><path d="M7.5 1.5 L7.5 6"/></g><path d="M5.2 5.8 L9.8 5.8 L7.5 8.8 Z" fill="#2a2a2a"/><rect x="4.3" y="11.8" width="2" height="2" fill="#2a2a2a"/><rect x="9.2" y="11.8" width="2" height="2" fill="#2a2a2a"/></svg>
<div class="a" style="left:0px;top:0px;width:1594px;height:1px;background:#c8b460;"></div>
<div class="a" style="left:0px;top:876px;width:1594px;height:1px;background:#c8b460;"></div>
<div class="a" style="left:0px;top:0px;width:1px;height:877px;background:#c8b460;"></div>
<div class="a" style="left:1593px;top:0px;width:1px;height:877px;background:#c8b460;"></div>
</body></html>
